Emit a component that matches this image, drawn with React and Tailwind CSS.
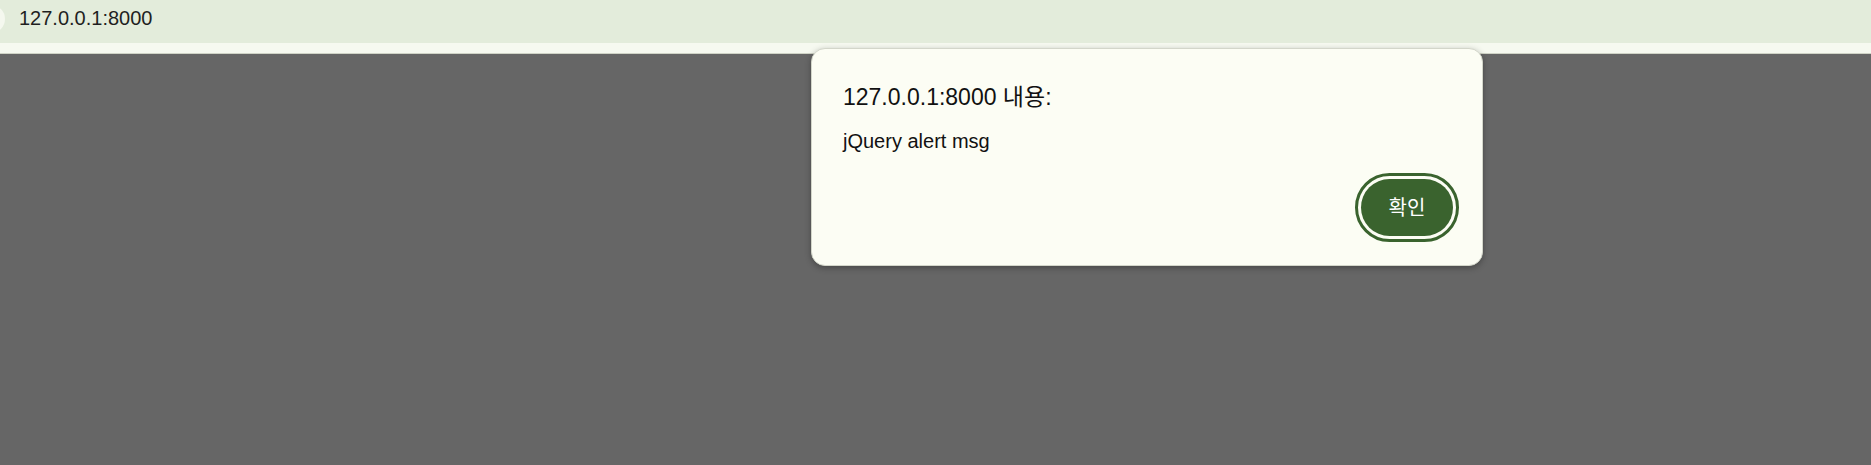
const App = () => {
    return (
        <div
            className="relative w-[1871px] h-[465px] overflow-hidden bg-[#666666]"
            style={{ fontFamily: '"Liberation Sans", "Noto Sans CJK KR", sans-serif' }}
        >
            {/* browser top bar */}
            <div className="h-[43px] bg-[#e3ecdb] flex items-start pt-[6px]">
                <div className="w-[28px] h-[28px] -ml-[23px] mt-[-1px] rounded-full bg-[#f5f8ef]" />
                <span className="ml-[14px] text-[20px] leading-[24px] text-[#1f1f1f]">127.0.0.1:8000</span>
            </div>
            <div className="h-[11px] bg-[#f6f9f0] border-b border-[#cfd3c6]" />

            {/* alert dialog */}
            <div className="absolute left-[811px] top-[48px] w-[672px] rounded-[14px] bg-[#fcfdf4] border border-[#d3d6ca] shadow-[0_2px_6px_rgba(0,0,0,0.3)] pl-[31px] pr-[29px] pt-[35px] pb-[29px]">
                <h2 className="text-[23px] leading-[27px] text-[#111]">127.0.0.1:8000 내용:</h2>
                <p className="mt-[18px] text-[20px] leading-[24px] text-[#111]">jQuery alert msg</p>
                <div className="flex justify-end mt-[26px]">
                    <button className="w-[92px] h-[57px] rounded-full bg-[#3a632e] text-white text-[20px] outline-[3px] outline-solid outline-[#3a632e] outline-offset-[3px]">
                        확인
                    </button>
                </div>
            </div>
        </div>
    );
};

export default App;
